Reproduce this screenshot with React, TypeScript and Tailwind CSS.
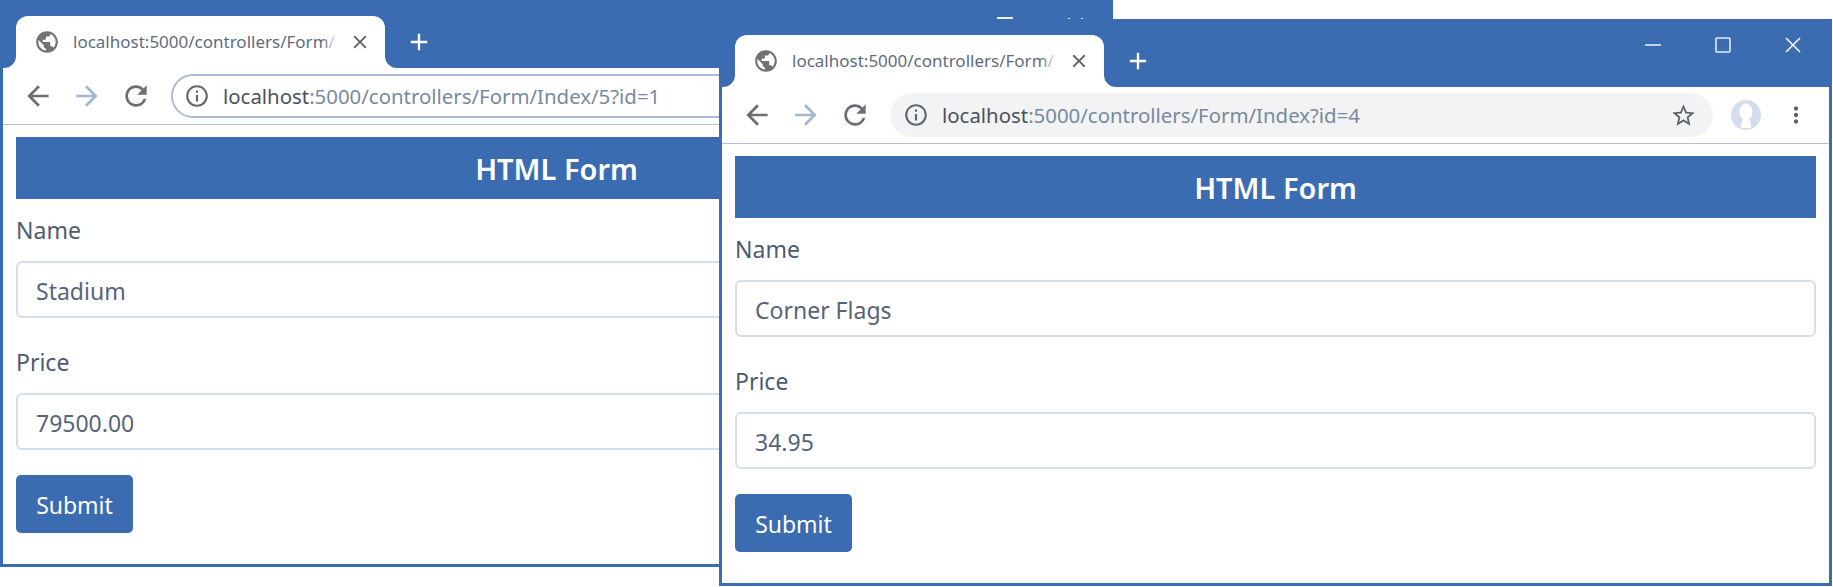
import { MdAdd, MdArrowBack, MdArrowForward, MdClose, MdInfoOutline, MdMoreVert, MdPublic, MdRefresh, MdStarBorder } from "react-icons/md";

function TabFlare({ side }: { side: "left" | "right" }) {
  // concave corner where the tab meets the toolbar
  return (
    <svg
      width="12"
      height="12"
      viewBox="0 0 12 12"
      className={side === "left" ? "absolute bottom-0 left-[-12px]" : "absolute bottom-0 right-[-12px]"}
    >
      <path d={side === "left" ? "M12 0 A12 12 0 0 1 0 12 L12 12 Z" : "M0 0 A12 12 0 0 0 12 12 L0 12 Z"} fill="#ffffff" />
    </svg>
  );
}

function Avatar() {
  return (
    <svg width="30" height="30" viewBox="0 0 30 30">
      <circle cx="15" cy="15" r="15" fill="#d3ddeb" />
      <ellipse cx="15" cy="12" rx="6.5" ry="8.5" fill="#ffffff" />
      <path d="M10 28 Q10 18 15 18 Q20 18 20 28 Z" fill="#ffffff" />
    </svg>
  );
}

function WindowControls() {
  return (
    <div className="ml-auto flex items-center gap-[54px] self-start pr-[28px] pt-[18px]">
      <svg width="16" height="16" viewBox="0 0 16 16">
        <path d="M0 8h16" stroke="#e6ecf5" strokeWidth="1.6" />
      </svg>
      <svg width="16" height="16" viewBox="0 0 16 16">
        <rect x="1" y="1" width="14" height="14" rx="1" fill="none" stroke="#e6ecf5" strokeWidth="1.6" />
      </svg>
      <svg width="16" height="16" viewBox="0 0 16 16">
        <path d="M1 1l14 14M15 1L1 15" stroke="#f2f5fa" strokeWidth="1.6" />
      </svg>
    </div>
  );
}

function Field({ label, value, className }: { label: string; value: string; className: string }) {
  return (
    <div className={className}>
      <div className="h-[30px] text-[23px] leading-[30px] text-[#4d5b70]">{label}</div>
      <div className="mt-[16px] flex h-[57px] items-center rounded-[6px] border-2 border-[#d3deec] px-[18px] pt-[3px] text-[23px] text-[#56647a]">
        {value}
      </div>
    </div>
  );
}

function BrowserWindow({ url, focused, name, price, className }: {
  url: string;
  focused: boolean;
  name: string;
  price: string;
  className: string;
}) {
  return (
    <div className={`absolute flex h-[567px] w-[1113px] flex-col border-x-[3px] border-b-[3px] border-[#3b6cb1] bg-white ${className}`}>
      <div className="relative flex h-[68px] shrink-0 items-end bg-[#3b6cb1] pl-[13px]">
        <div className="relative flex h-[52px] w-[369px] items-center rounded-t-[12px] bg-white pl-[18px]">
          <TabFlare side="left" />
          <TabFlare side="right" />
          <MdPublic size={26} color="#6f7277" className="shrink-0" />
          <div className="relative ml-[13px] w-[266px] whitespace-nowrap text-[17px] text-[#5f6b7c]">
            localhost:5000/controllers/Form/
            <div className="absolute inset-y-0 right-0 w-[18px] bg-gradient-to-r from-transparent to-white" />
          </div>
          <MdClose size={22} color="#5f6368" className="ml-[10px] shrink-0" />
        </div>
        <MdAdd size={28} color="#ffffff" className="ml-[20px] mb-[12px]" />
        {focused ? (
          <>
            {/* top edge of the back window's controls, the rest sits under the front window */}
            <span className="absolute left-[994px] top-[17px] h-[2px] w-[16px] bg-[#eef2f8]" />
            <span className="absolute left-[1065px] top-[18px] h-px w-[2px] bg-[#dfe6f1]" />
            <span className="absolute left-[1078px] top-[18px] h-px w-[2px] bg-[#dfe6f1]" />
          </>
        ) : (
          <WindowControls />
        )}
      </div>

      <div className="flex h-[56px] shrink-0 items-center pl-[19px] pr-[20px]">
        <MdArrowBack size={32} color="#6b6e73" />
        <MdArrowForward size={32} color="#a3b5cf" className="ml-[17px]" />
        <MdRefresh size={32} color="#6b6e73" className="ml-[17px]" />
        <div
          className={
            focused
              ? "ml-[19px] flex h-[44px] flex-1 items-center rounded-full border-2 border-[#a9bcd8] bg-white pl-[11px] pr-[14px]"
              : "ml-[19px] flex h-[44px] flex-1 items-center rounded-full bg-[#f1f3f4] pl-[13px] pr-[16px]"
          }
        >
          <MdInfoOutline size={26} color="#62666c" className="shrink-0" />
          <span className="ml-[13px] whitespace-nowrap text-[20.4px] text-[#7a899d]">
            <span className="text-[#4b525c]">localhost</span>
            {url}
          </span>
          <MdStarBorder size={27} color="#5f6368" className="ml-auto shrink-0" />
        </div>
        <div className="ml-[18px] shrink-0">
          <Avatar />
        </div>
        <MdMoreVert size={26} color="#5f6368" className="ml-[22px] shrink-0" />
      </div>
      <div className="h-px shrink-0 bg-[#b4c0d2]" />

      <div className="flex flex-1 flex-col px-[13px] pt-[12px]">
        <div className="flex h-[62px] items-center justify-center bg-[#3b6cb1] pt-[2px] text-[29px] font-semibold text-white">
          HTML Form
        </div>
        <Field label="Name" value={name} className="mt-[16px]" />
        <Field label="Price" value={price} className="mt-[29px]" />
        <button className="mt-[25px] h-[58px] w-[117px] rounded-[5px] bg-[#3b6cb1] pt-[2px] text-[23px] text-white">Submit</button>
      </div>
    </div>
  );
}

export default function App() {
  return (
    <div className="relative h-[587px] w-[1833px] overflow-hidden bg-white font-['Noto_Sans',sans-serif]">
      <BrowserWindow
        className="left-0 top-0"
        focused
        url=":5000/controllers/Form/Index/5?id=1"
        name="Stadium"
        price="79500.00"
      />
      <BrowserWindow
        className="left-[719px] top-[19px]"
        focused={false}
        url=":5000/controllers/Form/Index?id=4"
        name="Corner Flags"
        price="34.95"
      />
    </div>
  );
}
